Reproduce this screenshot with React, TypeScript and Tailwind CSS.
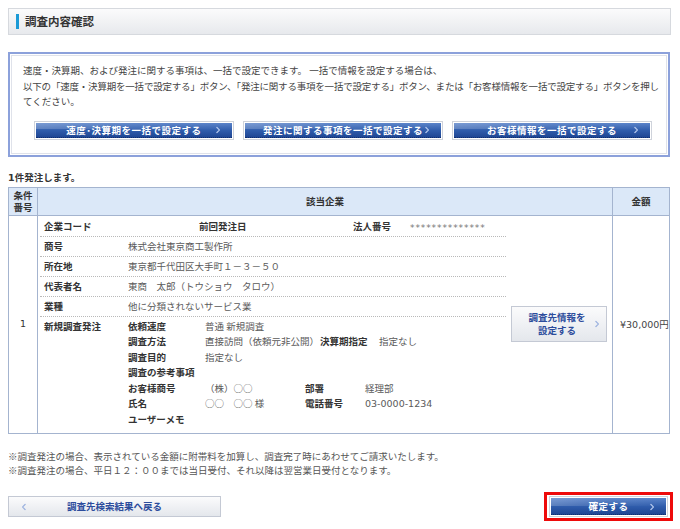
import React from "react";

const Chevron = ({ color = "#a9bfe8", dir = "right" }: { color?: string; dir?: "right" | "left" }) => (
  <svg width="4" height="7" viewBox="0 0 4 7" className="shrink-0">
    {dir === "right" ? (
      <polyline points="0.5,0.5 3.5,3.5 0.5,6.5" fill="none" stroke={color} strokeWidth="1.2" />
    ) : (
      <polyline points="3.5,0.5 0.5,3.5 3.5,6.5" fill="none" stroke={color} strokeWidth="1.2" />
    )}
  </svg>
);

const BlueButton = ({ label, w }: { label: string; w: string }) => (
  <div className={`${w} h-[19px] border border-[#cfd3db] p-px bg-white`}>
    <div className="relative h-full w-full bg-gradient-to-b from-[#5a83c9] via-[#2f5cab] to-[#1d4492] flex items-center justify-center">
      <div className="absolute inset-x-0 top-0 h-[45%] bg-gradient-to-r from-white/20 via-white/5 to-transparent" />
      <div className="absolute inset-x-0 bottom-0 h-px border-b border-dotted border-[#0f2e6e]" />
      <span className="relative text-white font-bold text-[9.5px] tracking-[0.5px]">{label}</span>
      <span className="absolute right-[12px] top-1/2 -translate-y-1/2 flex">
        <Chevron color="#b4c7ec" />
      </span>
    </div>
  </div>
);

const L = ({ w, children }: { w?: string; children?: React.ReactNode }) => (
  <div className={`${w ?? ""} shrink-0 font-bold text-[#333] whitespace-nowrap`}>{children}</div>
);
const V = ({ w, children, num }: { w?: string; children?: React.ReactNode; num?: boolean }) => (
  <div
    className={`${w ?? ""} shrink-0 text-[#5a5a5a] whitespace-nowrap ${
      num ? "font-['DejaVu_Sans','Noto_Sans_CJK_JP',sans-serif]" : ""
    }`}
  >
    {children}
  </div>
);

const InfoRow = ({ children }: { children: React.ReactNode }) => (
  <div className="h-[20px] border-b border-dotted border-[#b9b9b9] flex items-center pl-[4px]">{children}</div>
);

export default function App() {
  return (
    <div className="w-[680px] h-[529px] bg-white pl-[8px] pr-[10px] pt-[8px] text-[9.5px] text-[#444] font-['Noto_Sans_CJK_JP',sans-serif] overflow-hidden">
      {/* Title bar */}
      <div className="h-[27px] mr-[-1px] border border-[#d6d9de] bg-gradient-to-b from-[#fbfbfc] via-[#f1f2f4] to-[#e7e9ed] flex items-center pl-[7px]">
        <span className="w-[3px] h-[15px] bg-[#1b9ad6]" />
        <span className="ml-[6px] font-bold text-[11.5px] text-[#333]">調査内容確認</span>
      </div>

      {/* Info box */}
      <div className="mt-[17px] border-2 border-[#8ca1db] p-px">
        <div className="border border-[#dfe2ea] bg-white pt-[7px] pb-[13px]">
          <div className="pl-[11px] leading-[15.5px] text-[#444]">
            <div className="whitespace-nowrap">
              速度・決算期、および発注に関する事項は、一括で設定できます。 一括で情報を設定する場合は、
            </div>
            <div className="whitespace-nowrap tracking-[-0.2px]">
              以下の「速度・決算期を一括で設定する」ボタン、「発注に関する事項を一括で設定する」ボタン、または「お客様情報を一括で設定する」ボタンを押し
            </div>
            <div className="whitespace-nowrap">てください。</div>
          </div>
          <div className="mt-[11px] pl-[22px] flex gap-[9px]">
            <BlueButton label="速度･決算期を一括で設定する" w="w-[200px]" />
            <BlueButton label="発注に関する事項を一括で設定する" w="w-[200px]" />
            <BlueButton label="お客様情報を一括で設定する" w="w-[200px]" />
          </div>
        </div>
      </div>

      <div className="mt-[13px] leading-[14px] font-bold text-[#333]">
        <span className="font-['DejaVu_Sans','Noto_Sans_CJK_JP',sans-serif]">1</span>件発注します。
      </div>

      {/* Table */}
      <table className="mt-[2px] w-full table-fixed border-collapse">
        <colgroup>
          <col className="w-[29px]" />
          <col />
          <col className="w-[57px]" />
        </colgroup>
        <thead>
          <tr className="h-[28px] bg-[#dbe8f8]">
            <th className="border border-[#a4b4cf] p-0 align-middle">
              <div className="font-bold text-[#333] leading-[12px] text-center">
                <div>条件</div>
                <div>番号</div>
              </div>
            </th>
            <th className="border border-[#a4b4cf] p-0 font-bold text-[#333] text-center">該当企業</th>
            <th className="border border-[#a4b4cf] p-0 font-bold text-[#333] text-center">金額</th>
          </tr>
        </thead>
        <tbody>
          <tr>
            <td className="border border-[#a4b4cf] p-0 align-middle text-center text-[#333] font-['DejaVu_Sans','Noto_Sans_CJK_JP',sans-serif]">
              1
            </td>
            <td className="border border-[#a4b4cf] p-0 align-top">
              <div className="flex">
                <div className="ml-[2px] w-[466px] pt-[1px]">
                  <InfoRow>
                    <L w="w-[84px]">企業コード</L>
                    <V w="w-[71px]"></V>
                    <L w="w-[154px]">前回発注日</L>
                    <L w="w-[57px]">法人番号</L>
                    <V>
                      <span className="font-['DejaVu_Sans',sans-serif] text-[9px] tracking-[0.9px] text-[#777] relative top-[2px]">
                        **************
                      </span>
                    </V>
                  </InfoRow>
                  <InfoRow>
                    <L w="w-[84px]">商号</L>
                    <V>株式会社東京商工製作所</V>
                  </InfoRow>
                  <InfoRow>
                    <L w="w-[84px]">所在地</L>
                    <V>東京都千代田区大手町１－３－５０</V>
                  </InfoRow>
                  <InfoRow>
                    <L w="w-[84px]">代表者名</L>
                    <V>東商　太郎（トウショウ　タロウ）</V>
                  </InfoRow>
                  <InfoRow>
                    <L w="w-[84px]">業種</L>
                    <V>他に分類されないサービス業</V>
                  </InfoRow>
                  <div className="flex pl-[4px] pt-[2px] pb-[6px] leading-[15.5px]">
                    <L w="w-[84px]">新規調査発注</L>
                    <div className="flex flex-col">
                      <div className="flex">
                        <L w="w-[77px]">依頼速度</L>
                        <V>普通 新規調査</V>
                      </div>
                      <div className="flex">
                        <L w="w-[77px]">調査方法</L>
                        <V w="w-[115px]">直接訪問（依頼元非公開）</V>
                        <L w="w-[59px]">決算期指定</L>
                        <V>指定なし</V>
                      </div>
                      <div className="flex">
                        <L w="w-[77px]">調査目的</L>
                        <V>指定なし</V>
                      </div>
                      <div className="flex">
                        <L w="w-[77px]">調査の参考事項</L>
                      </div>
                      <div className="flex">
                        <L w="w-[77px]">お客様商号</L>
                        <V w="w-[100px]">（株）○○</V>
                        <L w="w-[60px]">部署</L>
                        <V>経理部</V>
                      </div>
                      <div className="flex">
                        <L w="w-[77px]">氏名</L>
                        <V w="w-[100px]">○○　○○ 様</V>
                        <L w="w-[60px]">電話番号</L>
                        <V num>03-0000-1234</V>
                      </div>
                      <div className="flex">
                        <L w="w-[77px]">ユーザーメモ</L>
                      </div>
                    </div>
                  </div>
                </div>
                <div className="flex-1 flex items-center justify-center">
                  <div className="w-[96px] h-[36px] border border-[#c4c9d4] bg-gradient-to-b from-[#fbfbfc] to-[#e4e7ec] relative flex items-center justify-center">
                    <div className="text-center font-bold text-[#2c4c9c] leading-[13px] -ml-[4px]">
                      調査先情報を
                      <br />
                      設定する
                    </div>
                    <span className="absolute right-[7px] top-1/2 -translate-y-1/2 flex">
                      <Chevron color="#9db3df" />
                    </span>
                  </div>
                </div>
              </div>
            </td>
            <td className="border border-[#a4b4cf] p-0 pl-[7px] align-middle text-[#444] whitespace-nowrap">
              <span className="font-['DejaVu_Sans','Noto_Sans_CJK_JP',sans-serif]">¥30,000</span>円
            </td>
          </tr>
        </tbody>
      </table>

      {/* Notes */}
      <div className="mt-[15px] leading-[14px] text-[#555]">
        <div className="whitespace-nowrap">※調査発注の場合、表示されている金額に附帯料を加算し、調査完了時にあわせてご請求いたします。</div>
        <div className="whitespace-nowrap">※調査発注の場合、平日１２：００までは当日受付、それ以降は翌営業日受付となります。</div>
      </div>

      {/* Bottom buttons */}
      <div className="mt-[15px] flex items-center justify-between">
        <div className="w-[213px] h-[21px] border border-[#c4c9d4] bg-gradient-to-b from-[#fbfbfc] to-[#e4e7ec] relative flex items-center justify-center">
          <span className="absolute left-[13px] top-1/2 -translate-y-1/2 flex">
            <Chevron color="#9db3df" dir="left" />
          </span>
          <span className="font-bold text-[#2c4c9c]">調査先検索結果へ戻る</span>
        </div>
        <div className="mr-[-3px] border-[3px] border-[#ee0a0a] px-[2px] py-px">
          <BlueButton label="確定する" w="w-[119px] !h-[21px]" />
        </div>
      </div>
    </div>
  );
}
